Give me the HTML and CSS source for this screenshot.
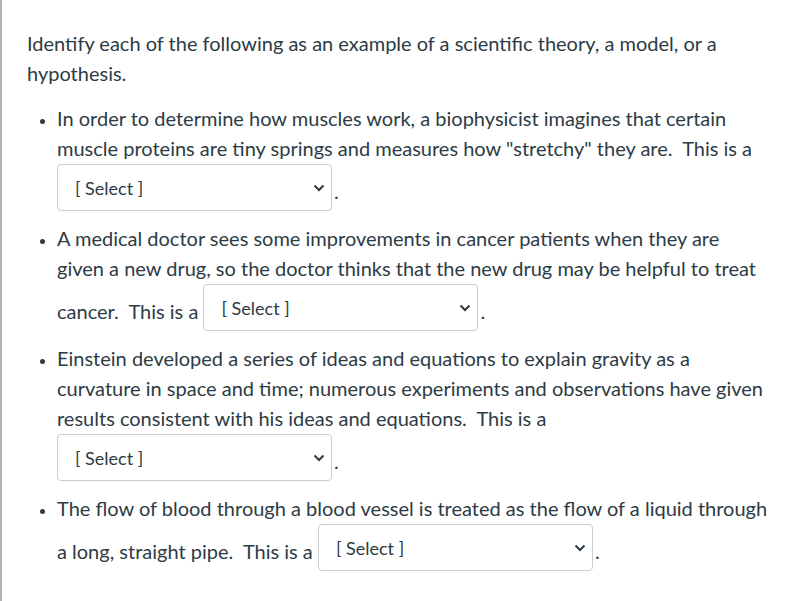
FILE: index.html
```html
<!DOCTYPE html>
<html>
<head>
<meta charset="utf-8">
<link rel="stylesheet" href="styles.css">
</head>
<body>
<div class="page">
  <p class="intro">Identify each of the following as an example of a scientific theory, a model, or a hypothesis.</p>
  <ul class="items">
    <li>In order to determine how muscles work, a biophysicist imagines that certain muscle proteins are tiny springs and measures how "stretchy" they are.&nbsp; This is a <span class="sel"><span class="sel-text">[ Select ]</span><svg class="chev" viewBox="0 0 12 8" width="12" height="8"><path d="M1.5 1.5 L6 6 L10.5 1.5" fill="none" stroke="#2d3b45" stroke-width="2"/></svg></span>.</li>
    <li>A medical doctor sees some improvements in cancer patients when they are given a new drug, so the doctor thinks that the new drug may be helpful to treat cancer.&nbsp; This is a <span class="sel"><span class="sel-text">[ Select ]</span><svg class="chev" viewBox="0 0 12 8" width="12" height="8"><path d="M1.5 1.5 L6 6 L10.5 1.5" fill="none" stroke="#2d3b45" stroke-width="2"/></svg></span>.</li>
    <li>Einstein developed a series of ideas and equations to explain gravity as a curvature in space and time; numerous experiments and observations have given results consistent with his ideas and equations.&nbsp; This is a <span class="sel"><span class="sel-text">[ Select ]</span><svg class="chev" viewBox="0 0 12 8" width="12" height="8"><path d="M1.5 1.5 L6 6 L10.5 1.5" fill="none" stroke="#2d3b45" stroke-width="2"/></svg></span>.</li>
    <li>The flow of blood through a blood vessel is treated as the flow of a liquid through a long, straight pipe.&nbsp; This is a <span class="sel"><span class="sel-text">[ Select ]</span><svg class="chev" viewBox="0 0 12 8" width="12" height="8"><path d="M1.5 1.5 L6 6 L10.5 1.5" fill="none" stroke="#2d3b45" stroke-width="2"/></svg></span>.</li>
  </ul>
</div>
</body>
</html>
```
FILE: styles.css
```css
html, body {
  margin: 0;
  padding: 0;
  background: #ffffff;
}
body {
  font-family: Lato, "Open Sans", sans-serif;
  color: #2d3b45;
  font-size: 20px;
  line-height: 30px;
}
.page {
  border-left: 2px solid #b4b4b4;
  height: 601px;
  box-sizing: border-box;
  padding: 28px 16px 0 25px;
}
.intro {
  margin: 0 0 15px 0;
}
.items {
  margin: 0;
  padding-left: 30px;
}
.items li {
  margin-bottom: 12px;
}
.items li::marker {
  font-size: 16px;
}
.sel {
  display: inline-flex;
  align-items: center;
  justify-content: space-between;
  box-sizing: border-box;
  width: 275px;
  height: 47px;
  border: 1px solid #c7cdd1;
  border-radius: 4px;
  padding: 0 6px 0 17px;
  vertical-align: 4px;
  margin: 1px 2px 0 0;
  font-size: 18px;
  line-height: 22px;
}
.chev {
  display: block;
}
```
